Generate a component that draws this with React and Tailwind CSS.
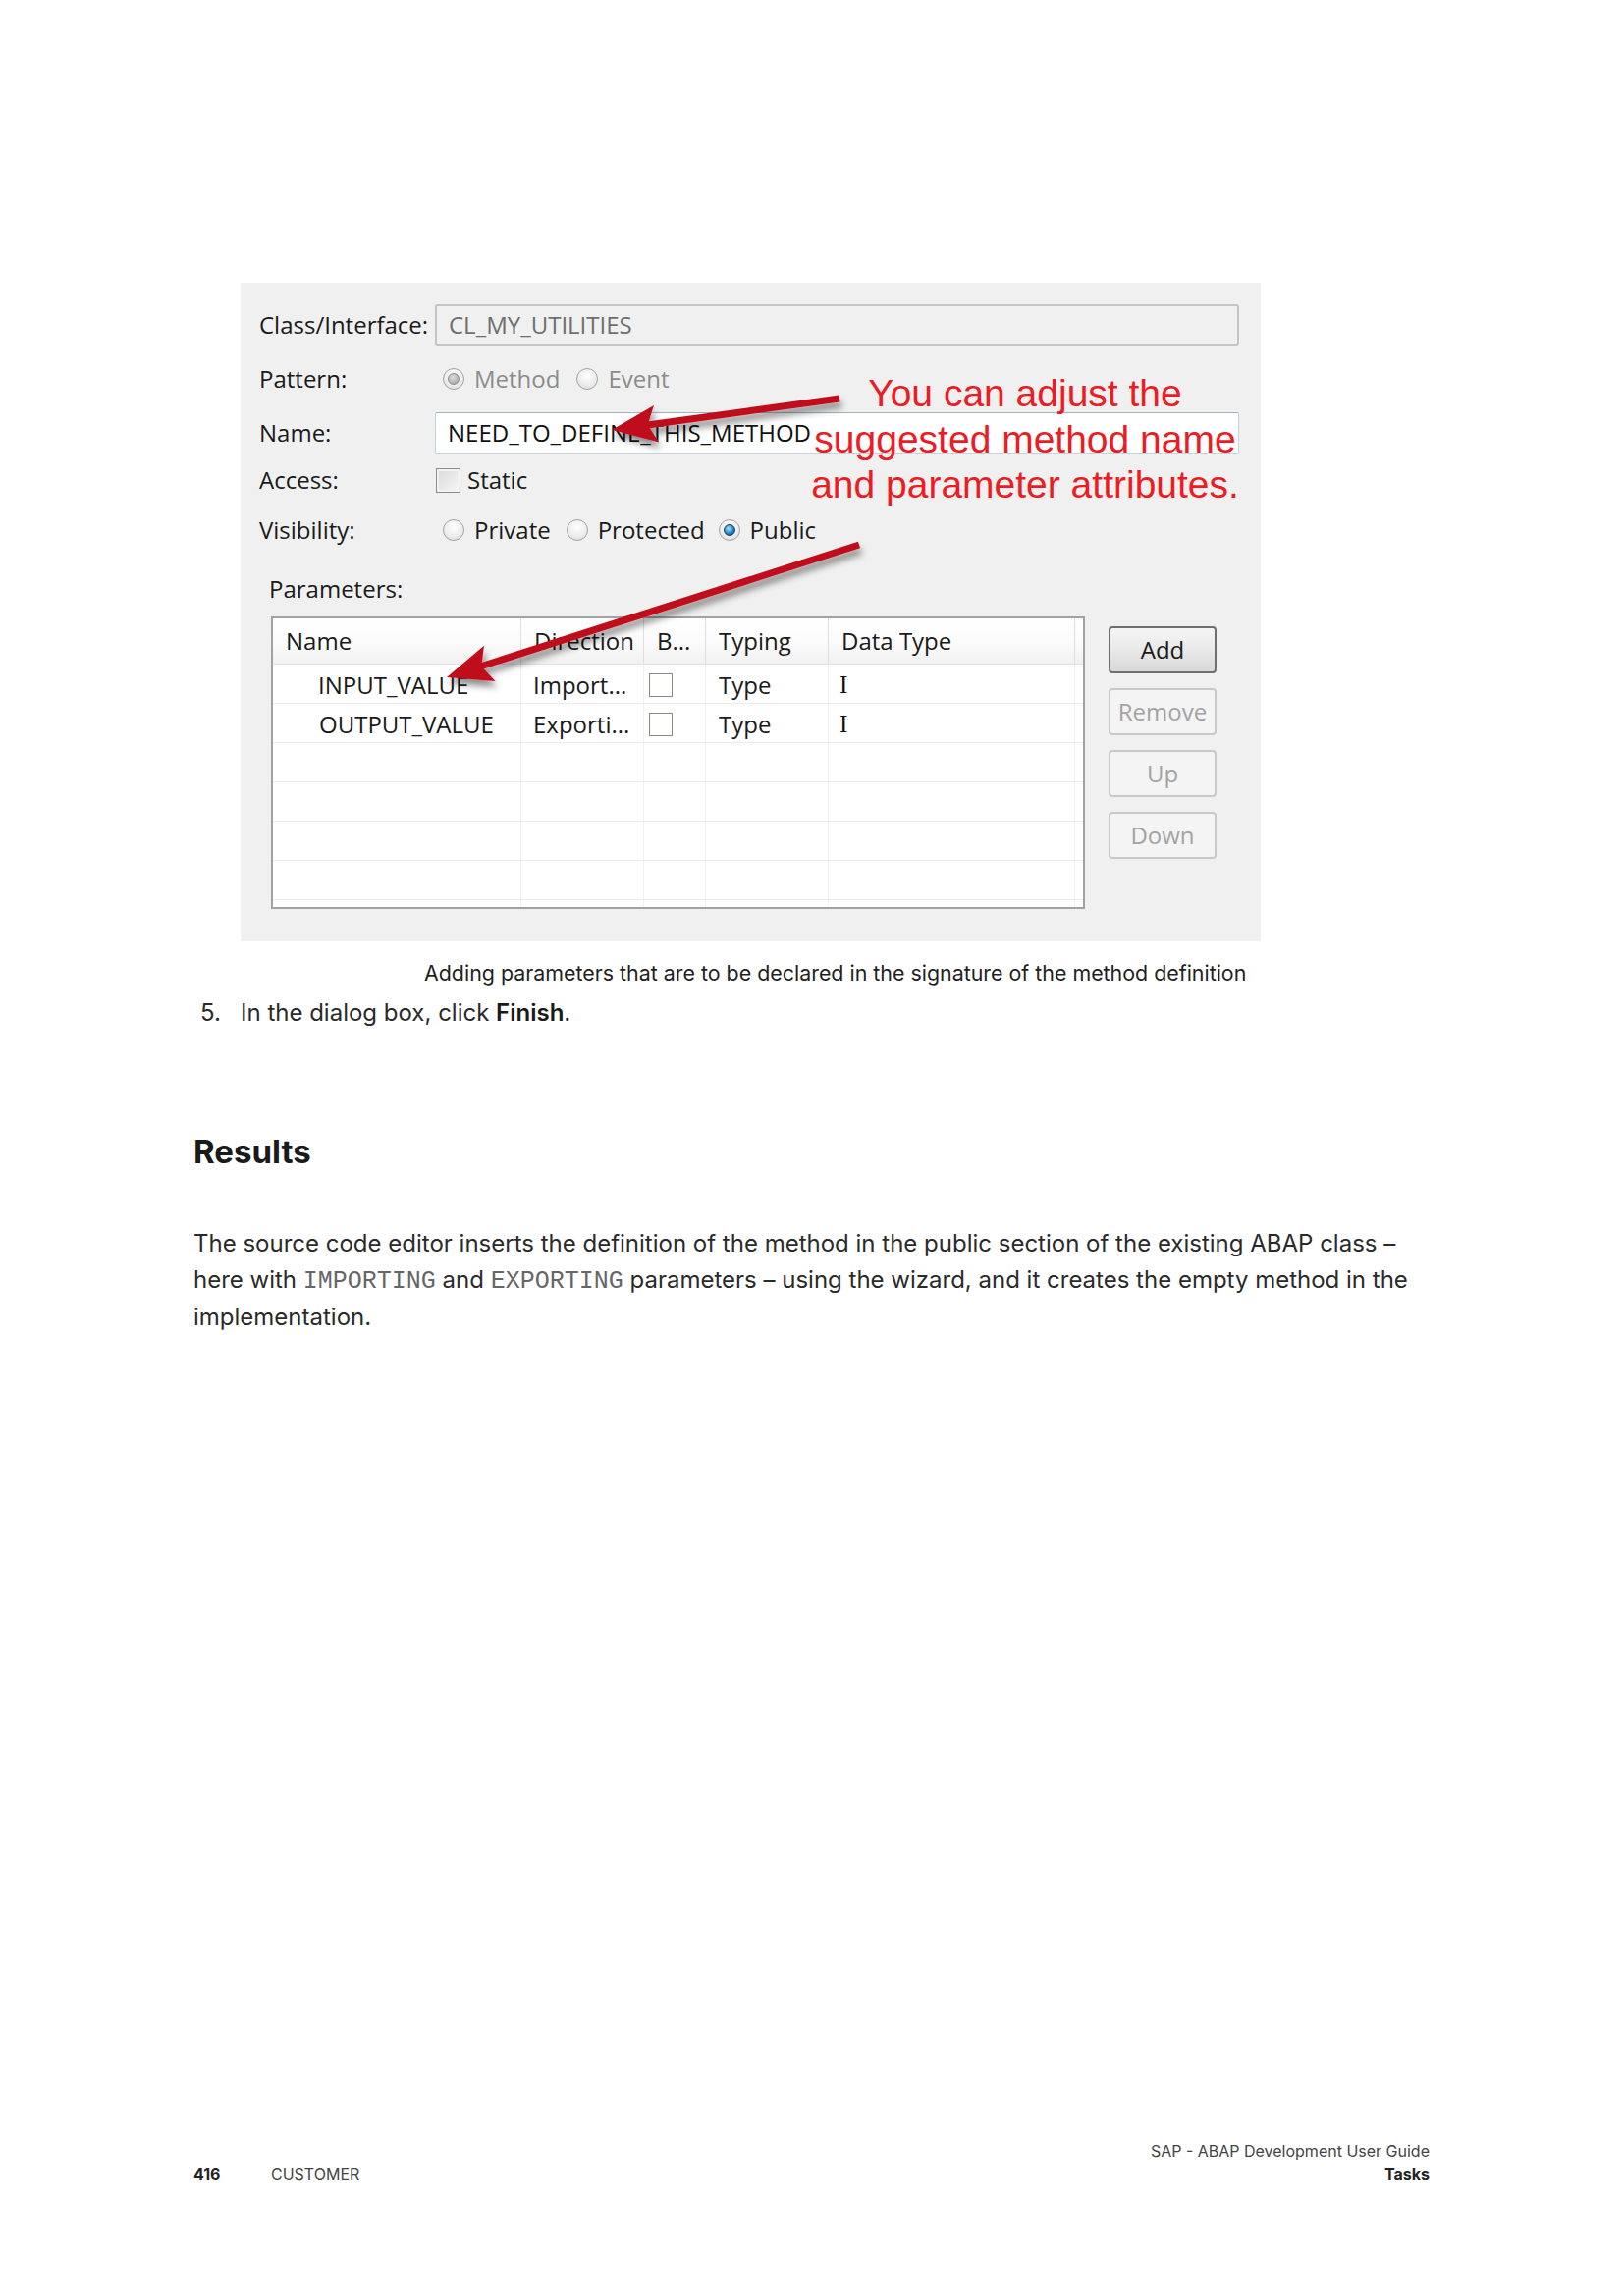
import React from "react";

const DLG = "font-['Open_Sans','Noto_Sans',sans-serif]";
const BODY = "font-['Inter','Roboto',sans-serif]";

function Radio({ checked, disabled }) {
  return (
    <span className="inline-flex w-[22px] h-[22px] shrink-0 items-center justify-center rounded-full border border-[#a4a4a4] bg-[radial-gradient(circle_at_50%_35%,#ffffff_0%,#ebebeb_60%,#d4d4d4_100%)]">
      {checked &&
        (disabled ? (
          <span className="w-[12px] h-[12px] rounded-full border border-[#8c8c8c] bg-[radial-gradient(circle_at_40%_35%,#dedede,#9a9a9a)]" />
        ) : (
          <span className="w-[12px] h-[12px] rounded-full border border-[#1d3b60] bg-[radial-gradient(circle_at_40%_35%,#a8e4ff,#2288cc_55%,#0b4a84)]" />
        ))}
    </span>
  );
}

function Arrow({ t, p, filterId }) {
  const dx = p[0] - t[0];
  const dy = p[1] - t[1];
  const len = Math.sqrt(dx * dx + dy * dy);
  const ux = dx / len;
  const uy = dy / len;
  const nx = -uy;
  const ny = ux;
  const L = 46;
  const W = 19;
  const bx = p[0] - ux * L;
  const by = p[1] - uy * L;
  const nbx = p[0] - ux * (L - 9);
  const nby = p[1] - uy * (L - 9);
  const pts = [
    [p[0], p[1]],
    [bx + nx * W, by + ny * W],
    [nbx, nby],
    [bx - nx * W, by - ny * W],
  ]
    .map((q) => q.join(","))
    .join(" ");
  return (
    <g filter={`url(#${filterId})`}>
      <line
        x1={t[0]}
        y1={t[1]}
        x2={nbx + ux * 2}
        y2={nby + uy * 2}
        stroke="#c0101a"
        strokeWidth="7"
        strokeLinecap="butt"
      />
      <polygon points={pts} fill="#c0101a" />
    </g>
  );
}

function HeaderCell({ w, children, last }) {
  return (
    <div
      className={`h-full flex items-center pl-[13px] shrink-0 ${last ? "" : "border-r border-[#dedede]"}`}
      style={{ width: w }}
    >
      {children}
    </div>
  );
}

const COLS = [253, 125, 63, 125, 251];

function Row({ cells }) {
  return (
    <div className="flex h-[40px] shrink-0 border-b border-[#ececec]">
      {COLS.map((w, i) => (
        <div
          key={i}
          className="h-full flex items-center pt-[3px] shrink-0 border-r border-[#f0f0f0]"
          style={{ width: w }}
        >
          {cells ? cells[i] : null}
        </div>
      ))}
      <div className="flex-1" />
    </div>
  );
}

function SmallCheck() {
  return <span className="ml-[5px] w-[24px] h-[24px] border border-[#8b8b80] bg-white" />;
}

function Btn({ children, enabled }) {
  return (
    <div
      className={`w-[110px] h-[48px] flex items-center justify-center rounded-[4px] text-[24px] ${
        enabled
          ? "border-2 border-[#6f6f6f] bg-[linear-gradient(#f5f5f5,#e9e9e9_50%,#d8d8d8)] text-[#1a1a1a]"
          : "border-2 border-[#c9c9c9] bg-[#f4f4f4] text-[#a3a3a3]"
      }`}
    >
      {children}
    </div>
  );
}

export default function App() {
  return (
    <div className="w-[1654px] h-[2339px] bg-white flex flex-col pl-[197px] text-[#222]">
      {/* Dialog screenshot */}
      <div className={`relative ml-[48px] mt-[288px] w-[1039px] h-[671px] shrink-0 bg-[#f0f0f0] ${DLG} text-[24px] text-[#1a1a1a]`}>
        <div className="flex flex-col pl-[19px] pr-[22px] pt-[22px]">
          <div className="flex items-center h-[42px]">
            <div className="w-[179px] shrink-0">Class/Interface:</div>
            <div className="flex-1 h-[42px] flex items-center pl-[12px] border-2 border-[#c4c4c4] rounded-[3px] bg-[#f0f0f0] text-[#6e6e6e]">
              CL_MY_UTILITIES
            </div>
          </div>
          <div className="flex items-center h-[42px] mt-[13px]">
            <div className="w-[179px] shrink-0">Pattern:</div>
            <div className="flex items-center text-[#8c8c8c]">
              <span className="ml-[8px] flex"><Radio checked disabled /></span>
              <span className="ml-[10px]">Method</span>
              <span className="ml-[17px] flex"><Radio /></span>
              <span className="ml-[10px]">Event</span>
            </div>
          </div>
          <div className="flex items-center h-[42px] mt-[13px]">
            <div className="w-[179px] shrink-0">Name:</div>
            <div className="flex-1 h-[42px] flex items-center pl-[12px] border border-[#c5d3e0] border-t-[#9fb3c8] rounded-[2px] bg-white text-[#111]">
              NEED_TO_DEFINE_THIS_METHOD
            </div>
          </div>
          <div className="flex items-center h-[42px] mt-[6px]">
            <div className="w-[179px] shrink-0">Access:</div>
            <span className="ml-[1px] w-[25px] h-[25px] border border-[#8e8e8e] bg-[linear-gradient(135deg,#d9d9d9,#f7f7f7)] shadow-[inset_0_0_0_2px_#f2f2f2]" />
            <span className="ml-[7px]">Static</span>
          </div>
          <div className="flex items-center h-[42px] mt-[9px]">
            <div className="w-[179px] shrink-0">Visibility:</div>
            <span className="ml-[8px] flex"><Radio /></span>
            <span className="ml-[10px]">Private</span>
            <span className="ml-[16px] flex"><Radio /></span>
            <span className="ml-[10px]">Protected</span>
            <span className="ml-[14px] flex"><Radio checked /></span>
            <span className="ml-[10px]">Public</span>
          </div>
          <div className="flex items-center h-[30px] mt-[24px] ml-[10px]">Parameters:</div>
          <div className="flex mt-[13px] ml-[12px]">
            <div className="w-[829px] h-[298px] border-2 border-[#a2a2a2] bg-white flex flex-col overflow-hidden">
              <div className="flex h-[47px] shrink-0 border-b border-[#e2e2e2] bg-[linear-gradient(#ffffff,#fbfbfb_55%,#f1f1f1)]">
                <HeaderCell w={253}>Name</HeaderCell>
                <HeaderCell w={125}>Direction</HeaderCell>
                <HeaderCell w={63}>B...</HeaderCell>
                <HeaderCell w={125}>Typing</HeaderCell>
                <HeaderCell w={251}>Data Type</HeaderCell>
                <div className="flex-1" />
              </div>
              <Row
                cells={[
                  <span className="pl-[46px]">INPUT_VALUE</span>,
                  <span className="pl-[12px]">Import...</span>,
                  <SmallCheck />,
                  <span className="pl-[13px]">Type</span>,
                  <span className="pl-[11px] font-['Liberation_Serif',serif] text-[25px] text-[#111]">I</span>,
                ]}
              />
              <Row
                cells={[
                  <span className="pl-[47px]">OUTPUT_VALUE</span>,
                  <span className="pl-[12px]">Exporti...</span>,
                  <SmallCheck />,
                  <span className="pl-[13px]">Type</span>,
                  <span className="pl-[11px] font-['Liberation_Serif',serif] text-[25px] text-[#111]">I</span>,
                ]}
              />
              <Row />
              <Row />
              <Row />
              <Row />
              <Row />
            </div>
            <div className="ml-[24px] mt-[10px] flex flex-col gap-[15px]">
              <Btn enabled>Add</Btn>
              <Btn>Remove</Btn>
              <Btn>Up</Btn>
              <Btn>Down</Btn>
            </div>
          </div>
        </div>

        {/* Annotation overlay */}
        <div className="absolute left-[569px] top-[90px] w-[460px] text-center font-['Liberation_Sans',Arial,sans-serif] text-[39px] leading-[46.5px] text-[#ec1c24]">
          You can adjust the
          <br />
          suggested method name
          <br />
          and parameter attributes.
        </div>
        <svg className="absolute left-0 top-0 pointer-events-none" width="1039" height="671">
          <defs>
            <filter id="shadow" x="-20%" y="-20%" width="140%" height="160%">
              <feDropShadow dx="2" dy="6" stdDeviation="3.5" floodColor="#000" floodOpacity="0.45" />
            </filter>
          </defs>
          <Arrow t={[610, 118]} p={[378, 150]} filterId="shadow" />
          <Arrow t={[630, 267]} p={[210, 402]} filterId="shadow" />
        </svg>
      </div>

      {/* Caption */}
      <div className={`${BODY} ml-[235px] mt-[18px] text-[21.4px] leading-[28px] text-[#1f1f1f]`}>
        Adding parameters that are to be declared in the signature of the method definition
      </div>

      {/* Step 5 */}
      <div className={`${BODY} flex mt-[10px] text-[24px] leading-[34px] text-[#2a2a2a]`}>
        <span className="w-[48px] pl-[7px] shrink-0">5.</span>
        <span>
          In the dialog box, click <span className="font-semibold text-[#1a1a1a]">Finish</span>.
        </span>
      </div>

      {/* Results */}
      <div className={`${BODY} mt-[104px] text-[33px] leading-[40px] font-bold text-[#1a1a1a]`}>Results</div>

      <p className={`${BODY} mt-[56px] text-[24px] leading-[36.5px] text-[#2a2a2a]`}>
        The source code editor inserts the definition of the method in the public section of the existing ABAP class –
        <br />
        here with{" "}
        <span className="font-['Liberation_Mono',monospace] text-[#666] text-[25px]">IMPORTING</span> and{" "}
        <span className="font-['Liberation_Mono',monospace] text-[#666] text-[25px]">EXPORTING</span> parameters – using the wizard, and it creates the empty method in the
        <br />
        implementation.
      </p>

      {/* Footer */}
      <div className={`${BODY} mt-auto mb-[112px] mr-[198px] flex items-end justify-between text-[16px] leading-[24px]`}>
        <div className="flex">
          <span className="font-bold text-[#222] w-[79px]">416</span>
          <span className="text-[#444]">CUSTOMER</span>
        </div>
        <div className="flex flex-col items-end">
          <span className="text-[#444]">SAP - ABAP Development User Guide</span>
          <span className="font-bold text-[#222]">Tasks</span>
        </div>
      </div>
    </div>
  );
}
